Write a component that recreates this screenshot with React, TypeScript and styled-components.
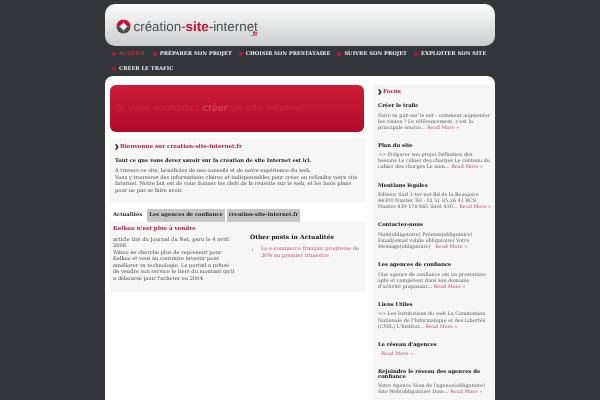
import React from "react";
import styled, { createGlobalStyle } from "styled-components";

const GlobalStyle = createGlobalStyle`
  html, body {
    margin: 0;
    padding: 0;
    height: 400px;
    overflow: hidden;
    background: #33363b;
    font-family: "DejaVu Serif", serif;
    font-size: 5px;
    color: #555;
    text-rendering: geometricPrecision;
  }
  * { box-sizing: border-box; }
`;

const navItems = [
  "Accueil",
  "Préparer son projet",
  "Choisir son prestataire",
  "Suivre son projet",
  "Exploiter son site",
  "Créer le trafic",
];

const focusItems = [
  {
    title: "Créer le trafic",
    text: "Faire sa pub sur le net : comment augmenter les visites ? Le référencement, c'est la principale source...",
  },
  {
    title: "Plan du site",
    text: ">> Préparer son projet Définition des besoins Le cahier des charges Le contenu du cahier des charges Le nom...",
  },
  {
    title: "Mentions légales",
    text: "Editeur Sarl 1-ter-net Bd de la Beaujoire 44300 Nantes Tel : 02 51 85 26 41 RCS Nantes 430 178 665 Siret 430...",
  },
  {
    title: "Contactez-nous",
    text: "Nom(obligatoire) Prénom(obligatoire) Email(email valide obligatoire) Votre Message(obligatoire) \u00a0",
  },
  {
    title: "Les agences de confiance",
    text: "Une agence de confiance est un prestataire apte et compétent dans son domaine d'activité proposant...",
  },
  {
    title: "Liens Utiles",
    text: ">> Les Institutions du web La Commission Nationale de l'Informatique et des Libertés (CNIL) L'Institut...",
  },
  { title: "Le réseau d'agences", text: "\u00a0" },
  {
    title: "Rejoindre le réseau des agences de confiance",
    text: "Votre Agence Nom de l'agence(obligatoire) Site Web(obligatoire) Date...",
  },
];

const Quote = () => (
  <QuoteIcon viewBox="0 0 6 9">
    <path d="M0 0.5 L2.5 0.5 L5.5 4.5 L2.5 8.5 L0 8.5 L2.5 4.5 Z" fill="#222" />
  </QuoteIcon>
);

const Logo = () => (
  <LogoRow>
    <svg width="15" height="15" viewBox="0 0 16 16">
      <path d="M8 8 L8 0.5 A7.5 7.5 0 0 0 0.5 8 Z" fill="#c8102e" />
      <path d="M8 8 L8 0.5 A7.5 7.5 0 0 1 15.5 8 Z" fill="#c8102e" />
      <path d="M8 8 L15.5 8 A7.5 7.5 0 0 1 8 15.5 Z" fill="#4a4d50" />
      <path d="M8 8 L0.5 8 A7.5 7.5 0 0 0 8 15.5 Z" fill="#4a4d50" />
      <path d="M8 3.8 L12.2 8 L8 12.2 L3.8 8 Z" fill="#f2f2f2" />
    </svg>
    <LogoText>
      création-<strong>site</strong>-internet
      <LogoSuffix>.fr</LogoSuffix>
    </LogoText>
  </LogoRow>
);

const App = () => (
  <>
    <GlobalStyle />
    <Page>
      <Header>
        <Logo />
      </Header>
      <Nav>
        {navItems.map((item, i) => (
          <NavItem key={item} $active={i === 0}>
            {item}
          </NavItem>
        ))}
      </Nav>
      <Content>
        <Main>
          <Banner>
            Si vous souhaitez <BannerStrong>créer</BannerStrong> un site Internet
          </Banner>
          <Intro>
            <SectionTitle>
              <Quote />
              Bienvenue sur creation-site-internet.fr
            </SectionTitle>
            <Lead>Tout ce que vous devez savoir sur la création de site Internet est ici.</Lead>
            <Body>
              A travers ce site, bénéficiez de nos conseils et de notre expérience du web.
              <br />
              Vous y trouverez des informations claires et indispensables pour créer ou refondre
              votre site Internet. Notre but est de vous donner les clefs de la réussite sur le web,
              et les bons plans pour ne pas se faire avoir.
            </Body>
          </Intro>
          <Tabs>
            <Tab $active>Actualités</Tab>
            <Tab>Les agences de confiance</Tab>
            <Tab>creation-site-internet.fr</Tab>
          </Tabs>
          <TabPanel>
            <PostCol>
              <PostTitle>Kelkoo n'est plus à vendre</PostTitle>
              <Body>
                article tiré du Journal du Net, paru le 4 avril 2008
                <br />
                Yahoo ne cherche plus de repreneur pour Kelkoo et veut au contraire investir pour
                améliorer sa technologie. Le portail a refusé de vendre son service le tiers du
                montant qu'il a déboursé pour l'acheter en 2004.
              </Body>
            </PostCol>
            <OtherCol>
              <OtherTitle>Other posts in Actualités</OtherTitle>
              <OtherList>
                <li>Le e-commerce français progresse de 30% au premier trimestre</li>
              </OtherList>
            </OtherCol>
          </TabPanel>
        </Main>
        <Sidebar>
          <SectionTitle>
            <Quote />
            Focus
          </SectionTitle>
          {focusItems.map((item) => (
            <FocusItem key={item.title}>
              <FocusTitle>{item.title}</FocusTitle>
              <FocusText>
                {item.text} <ReadMore>Read More »</ReadMore>
              </FocusText>
            </FocusItem>
          ))}
        </Sidebar>
      </Content>
    </Page>
  </>
);

export default App;

const Page = styled.div`
  width: 390px;
  height: 400px;
  margin: 0 auto;
  padding-top: 4px;
  overflow: hidden;
  filter: blur(0.25px);
`;

const Header = styled.header`
  height: 42px;
  border-radius: 10px;
  background: linear-gradient(#fdfdfd, #cbcccd);
  display: flex;
  align-items: center;
  padding: 0 0 0 10.5px;
`;

const LogoRow = styled.div`
  display: flex;
  align-items: center;
  gap: 3px;
  margin-top: 2px;
`;

const LogoText = styled.div`
  position: relative;
  font-family: "Liberation Sans", sans-serif;
  font-size: 13.4px;
  color: #4a4c4f;

  strong {
    color: #c8102e;
  }
`;

const LogoSuffix = styled.span`
  position: absolute;
  right: 0;
  top: 12px;
  font-size: 7px;
  font-weight: bold;
  color: #c8102e;
`;

const Nav = styled.nav`
  height: 30px;
  padding: 0 0 0 7px;
  display: flex;
  flex-wrap: wrap;
  align-content: flex-start;
  column-gap: 7px;
`;

const NavItem = styled.a<{ $active?: boolean }>`
  height: 15px;
  font-size: 5.2px;
  font-weight: bold;
  text-transform: uppercase;
  color: ${({ $active }) => ($active ? "#c8304a" : "#eee")};
  display: flex;
  align-items: center;
  gap: 3px;

  &::before {
    content: "";
    width: 4px;
    height: 4px;
    border-radius: 50%;
    background: #c8102e;
  }
`;

const Content = styled.div`
  height: 324px;
  background: #fff;
  border-radius: 8px 8px 0 0;
  padding: 9px 1px 0 5px;
  display: flex;
  gap: 7px;
`;

const Main = styled.main`
  width: 256px;
  flex: none;
`;

const Banner = styled.div`
  width: 254px;
  height: 47px;
  border-radius: 6px;
  background: linear-gradient(#cf1c38, #b00a28);
  color: #cd2a43;
  font-family: "DejaVu Sans", sans-serif;
  font-size: 9.6px;
  padding: 18px 0 0 6px;
`;

const BannerStrong = styled.span`
  color: #d9586c;
`;

const Intro = styled.section`
  background: #f6f6f6;
  margin-top: 6px;
  height: 64px;
  padding: 4px 5px;
`;

const SectionTitle = styled.h2`
  margin: 0;
  font-size: 5.6px;
  line-height: 10px;
  font-weight: bold;
  color: #ad2449;
  display: flex;
  align-items: center;
  gap: 1px;
`;

const QuoteIcon = styled.svg`
  width: 4px;
  height: 6px;
`;

const Lead = styled.p`
  margin: 5.5px 0 3.5px;
  font-weight: bold;
  font-size: 5.15px;
  line-height: 7px;
  color: #222;
`;

const Body = styled.p`
  margin: 0;
  font-size: 5.15px;
  line-height: 6.6px;
  color: #444;
`;

const Tabs = styled.div`
  display: flex;
  align-items: stretch;
  gap: 2px;
  margin-top: 7px;
  height: 12.5px;
`;

const Tab = styled.span<{ $active?: boolean }>`
  padding: 0 ${({ $active }) => ($active ? "3px" : "2px")};
  font-size: 5.2px;
  line-height: 12.5px;
  font-weight: bold;
  color: #222;
  background: ${({ $active }) => ($active ? "#fff" : "#c6c6c6")};
`;

const TabPanel = styled.section`
  background: #f6f6f6;
  height: 70px;
  display: flex;
  padding: 3.5px 3px;
`;

const PostCol = styled.div`
  width: 124px;
  flex: none;
`;

const PostTitle = styled.h3`
  margin: 0 0 2.5px;
  font-size: 5.6px;
  line-height: 9px;
  color: #ad2449;
`;

const OtherCol = styled.div`
  margin-left: 13px;
  padding-top: 8px;
`;

const OtherTitle = styled.h3`
  margin: 0 0 4px;
  font-size: 6px;
  line-height: 9px;
  color: #111;
`;

const OtherList = styled.ul`
  margin: 0;
  padding-left: 11px;
  color: #c04a70;
  font-size: 5.15px;
  line-height: 6.6px;
`;

const Sidebar = styled.aside`
  width: 121px;
  flex: none;
  background: #f6f6f6;
  padding: 2px 2px 0 5px;
`;

const FocusItem = styled.div`
  margin-top: 7px;
  margin-bottom: 13px;
`;

const FocusTitle = styled.h4`
  margin: 0 0 4px;
  font-size: 5.2px;
  line-height: 4.5px;
  color: #111;
`;

const FocusText = styled.p`
  margin: 0;
  font-size: 4.9px;
  line-height: 6.1px;
  color: #555;
`;

const ReadMore = styled.a`
  color: #c04a70;
  white-space: nowrap;
`;
